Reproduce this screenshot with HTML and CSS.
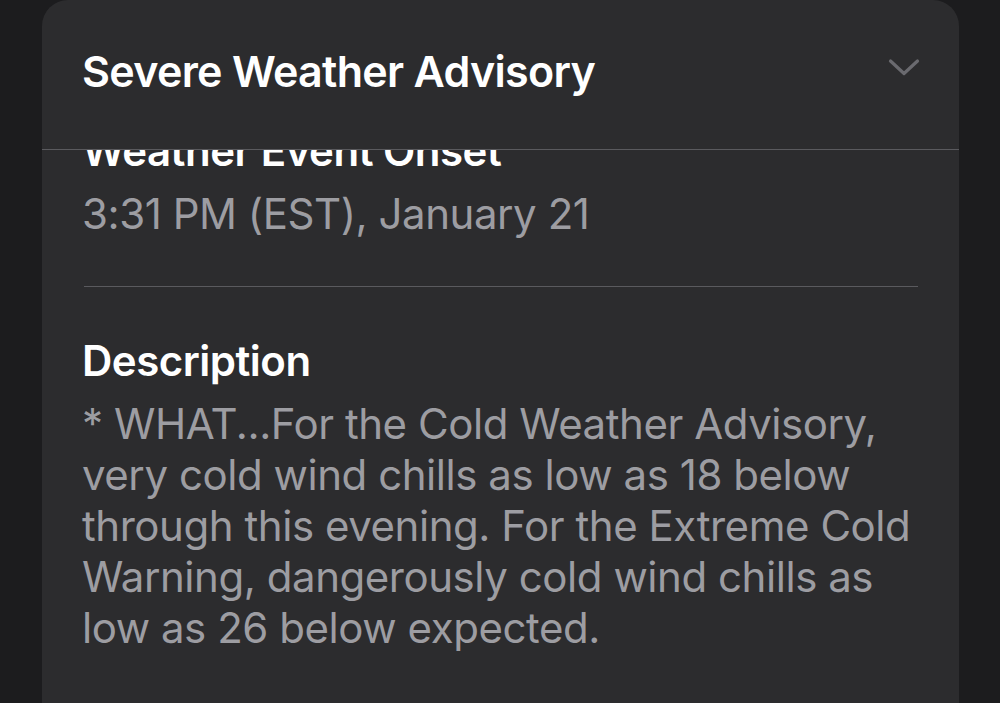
FILE: index.html
```html
<!DOCTYPE html>
<html lang="en">
<head>
<meta charset="utf-8">
<link rel="stylesheet" href="styles.css">
</head>
<body>
<div class="screen">
  <section class="card">
    <header class="card-header">
      <h1 class="card-title">Severe Weather Advisory</h1>
      <svg class="chevron" width="32" height="20" viewBox="0 0 32 20" aria-hidden="true">
        <path d="M2.5 3 L16 15.5 L29.5 3" fill="none" stroke="#6a6a6f" stroke-width="3.2" stroke-linecap="round" stroke-linejoin="round"/>
      </svg>
    </header>
    <div class="card-body">
      <div class="scroll">
        <div class="field">
          <h2 class="field-label">Weather Event Onset</h2>
          <p class="field-value">3:31 PM (EST), January 21</p>
        </div>
        <hr class="divider">
        <div class="field">
          <h2 class="field-label">Description</h2>
          <p class="field-value">* WHAT...For the Cold Weather Advisory,<br>very cold wind chills as low as 18 below<br>through this evening. For the Extreme Cold<br>Warning, dangerously cold wind chills as<br>low as 26 below expected.</p>
        </div>
      </div>
    </div>
  </section>
</div>
</body>
</html>
```
FILE: styles.css
```css
* { box-sizing: border-box; }
html, body { margin: 0; padding: 0; }
body {
  background: #1c1c1e;
  font-family: Inter, "Liberation Sans", sans-serif;
  width: 1000px;
  height: 703px;
  overflow: hidden;
}
.screen {
  display: flex;
  justify-content: center;
  height: 703px;
}
.card {
  width: 917px;
  margin-left: 1px;
  background: #2c2c2e;
  border-radius: 26px 26px 0 0;
  display: flex;
  flex-direction: column;
  overflow: hidden;
}
.card-header {
  height: 150px;
  flex: none;
  display: flex;
  align-items: center;
  justify-content: space-between;
  padding: 0 39px 6px 40px;
  border-bottom: 1px solid #5a5a5e;
}
.card-title {
  margin: 0;
  color: #ffffff;
  font-size: 43px;
  font-weight: 600;
  letter-spacing: -0.7px;
  line-height: 1;
}
.chevron { display: block; margin-bottom: 8px; }
.card-body {
  flex: 1;
  overflow: hidden;
}
.scroll {
  margin-top: -25px;
  padding: 0 41px 0 42px;
}
.field-label {
  margin: 0 0 12px -2px;
  color: #ffffff;
  font-size: 42px;
  font-weight: 600;
  letter-spacing: -0.5px;
  line-height: 51px;
}
.field-value {
  margin: 0 -40px 0 -2px;
  color: #9d9da2;
  font-size: 42px;
  font-weight: 400;
  letter-spacing: -0.45px;
  line-height: 51px;
}
.divider {
  border: 0;
  border-top: 1px solid #5a5a5e;
  margin: 47px 0 48px;
}
```
